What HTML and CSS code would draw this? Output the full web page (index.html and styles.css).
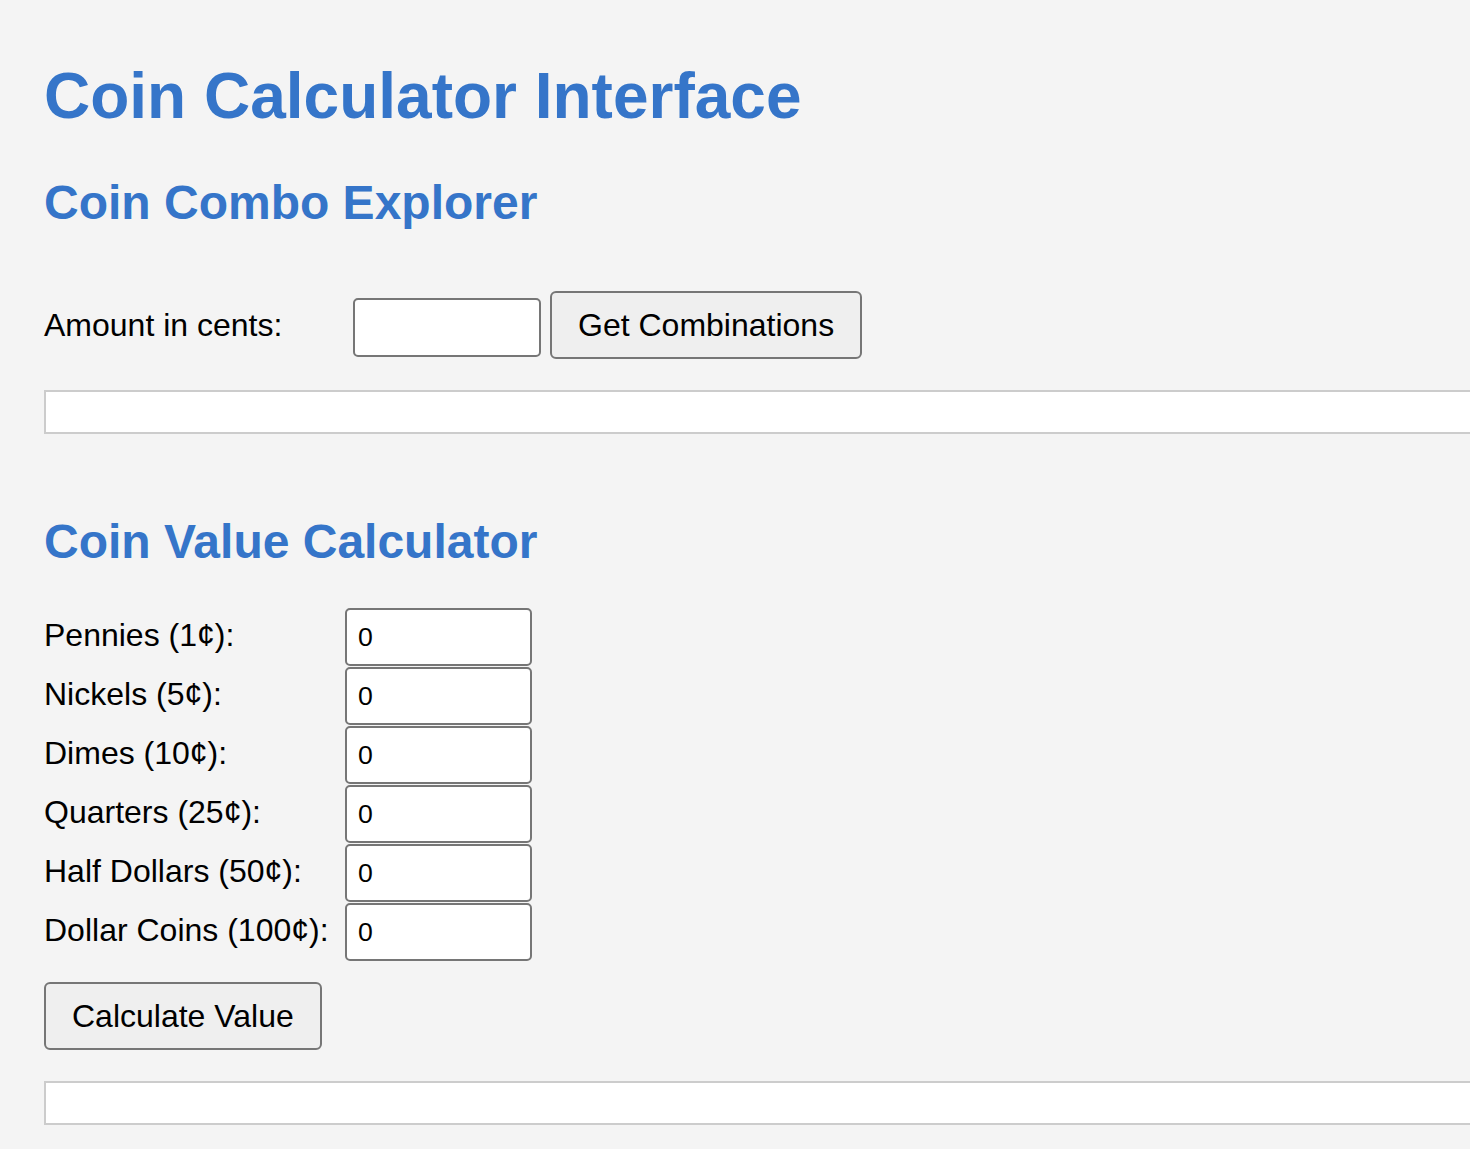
FILE: index.html
```html
<!DOCTYPE html>
<html lang="en">
<head>
<meta charset="utf-8">
<title>Coin Calculator Interface</title>
<link rel="stylesheet" href="styles.css">
</head>
<body>
  <h1 class="title">Coin Calculator Interface</h1>

  <section class="section">
    <h2 class="section-title">Coin Combo Explorer</h2>
    <div class="combo-row">
      <label class="combo-label" for="amount">Amount in cents:</label>
      <input class="field combo-field" id="amount" type="text" value="">
      <button class="btn" type="button">Get Combinations</button>
    </div>
    <div class="result"></div>
  </section>

  <section class="section section-second">
    <h2 class="section-title">Coin Value Calculator</h2>
    <div class="calc-grid">
      <label class="calc-label" for="p">Pennies (1¢):</label>
      <input class="field" id="p" type="text" value="0">
      <label class="calc-label" for="n">Nickels (5¢):</label>
      <input class="field" id="n" type="text" value="0">
      <label class="calc-label" for="d">Dimes (10¢):</label>
      <input class="field" id="d" type="text" value="0">
      <label class="calc-label" for="q">Quarters (25¢):</label>
      <input class="field" id="q" type="text" value="0">
      <label class="calc-label" for="h">Half Dollars (50¢):</label>
      <input class="field" id="h" type="text" value="0">
      <label class="calc-label" for="c">Dollar Coins (100¢):</label>
      <input class="field" id="c" type="text" value="0">
    </div>
    <button class="btn calc-btn" type="button">Calculate Value</button>
    <div class="result"></div>
  </section>
</body>
</html>
```

FILE: styles.css
```css
html {
  overflow: hidden;
  background: #f4f4f4;
}

body {
  margin: 0;
  padding: 0 0 0 44px;
  background: #f4f4f4;
  font-family: "Liberation Sans", Arial, sans-serif;
  color: #000;
}

.title {
  margin: 59px 0 0;
  font-size: 64px;
  line-height: 74px;
  font-weight: 700;
  color: #3575c9;
}

.section {
  margin: 0;
}

.section-title {
  margin: 42px 0 0;
  font-size: 48px;
  line-height: 55px;
  font-weight: 700;
  color: #3575c9;
}

.section-second .section-title {
  margin-top: 80px;
}

.combo-row {
  display: flex;
  align-items: center;
  gap: 9px;
  margin-top: 61px;
}

.combo-label {
  width: 300px;
  font-size: 32px;
  line-height: 37px;
}

.field {
  box-sizing: border-box;
  width: 187px;
  height: 58px;
  margin: 0;
  padding: 0 11px;
  border: 2px solid #767676;
  border-radius: 5px;
  background: #fff;
  font-family: "Liberation Sans", Arial, sans-serif;
  font-size: 26.67px;
  color: #000;
}

.combo-field {
  width: 188px;
  height: 59px;
  margin-top: 4px;
}

.btn {
  box-sizing: border-box;
  height: 68px;
  margin: 0;
  padding: 0 26px;
  border: 2px solid #767676;
  border-radius: 6px;
  background: #efefef;
  font-family: "Liberation Sans", Arial, sans-serif;
  font-size: 32px;
  color: #000;
}

.result {
  box-sizing: border-box;
  height: 44px;
  margin: 31px -60px 0 0;
  border: 2px solid #cccccc;
  background: #fff;
}

.calc-grid {
  display: grid;
  grid-template-columns: 301px 187px;
  grid-auto-rows: 58px;
  row-gap: 1px;
  align-items: center;
  margin-top: 39px;
}

.calc-label {
  padding-bottom: 3px;
  font-size: 32px;
  line-height: 37px;
  white-space: nowrap;
}

.calc-btn {
  display: block;
  margin-top: 21px;
}
```
